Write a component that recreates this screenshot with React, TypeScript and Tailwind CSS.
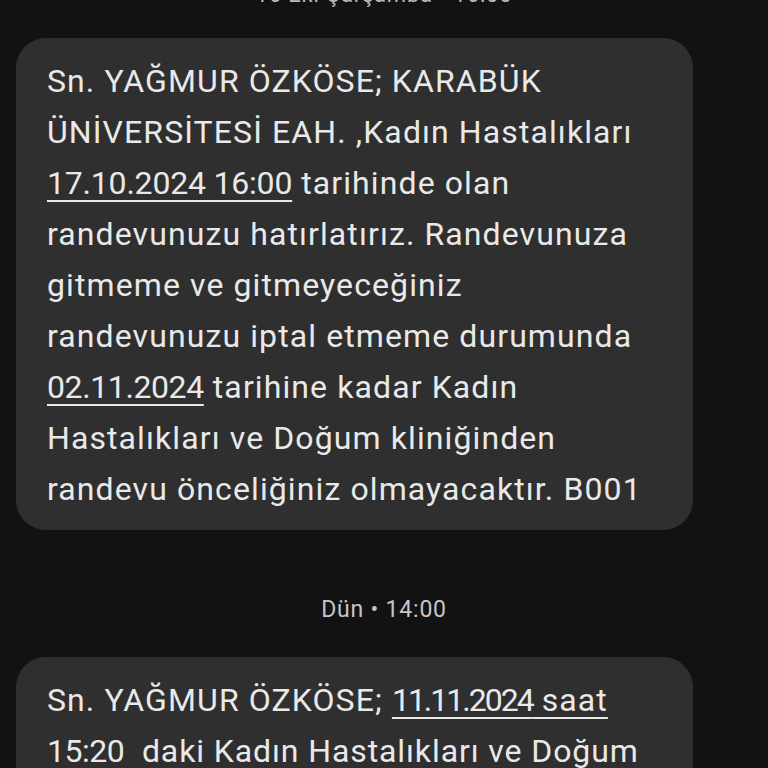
import React from "react";

const font = { fontFamily: "Roboto, 'Noto Sans', sans-serif" };

function Link({ children, className = "" }: { children: React.ReactNode; className?: string }) {
  return (
    <span className={`underline decoration-2 underline-offset-[6px] ${className}`}>{children}</span>
  );
}

function Bubble({ lines }: { lines: React.ReactNode[] }) {
  return (
    <div className="w-[677px] rounded-[30px] bg-[#2f2f2f] pl-[31px] pr-4 pt-[18px] pb-[15px] text-[32px] leading-[51px] tracking-[1.1px] text-[#e9e9e9]">
      {lines.map((l, i) => (
        <div key={i} className="whitespace-pre">
          {l}
        </div>
      ))}
    </div>
  );
}

export default function App() {
  return (
    <div className="h-[768px] w-[768px] overflow-hidden bg-[#121212] px-4" style={font}>
      <div className="h-[10px] overflow-hidden text-center">
        <div className="mt-[-17px] text-[22px] leading-[24px] tracking-[0.8px] text-[#bdbdbd]">
          16 Eki Çarşamba • 16:00
        </div>
      </div>

      <div className="mt-[28px]">
        <Bubble
          lines={[
            "Sn. YAĞMUR ÖZKÖSE; KARABÜK",
            "ÜNİVERSİTESİ EAH. ,Kadın Hastalıkları",
            <>
              <Link className="tracking-[-0.2px]">17.10.2024 16:00</Link> tarihinde olan
            </>,
            "randevunuzu hatırlatırız. Randevunuza",
            "gitmeme ve gitmeyeceğiniz",
            "randevunuzu iptal etmeme durumunda",
            <>
              <Link className="tracking-[-0.4px]">02.11.2024</Link> tarihine kadar Kadın
            </>,
            "Hastalıkları ve Doğum kliniğinden",
            "randevu önceliğiniz olmayacaktır. B001",
          ]}
        />
      </div>

      <div className="mt-[66px] mb-[33px] text-center text-[23px] leading-[28px] tracking-[0.8px] text-[#c6c6c6]">
        Dün • 14:00
      </div>

      <Bubble
        lines={[
          <>
            Sn. YAĞMUR ÖZKÖSE;{" "}
            <Link>
              <span className="tracking-[-2px]">11.11.2024</span> saat
            </Link>
          </>,
          <span className="tracking-[0.9px]">
            <Link className="tracking-[-0.5px]">15:20</Link>
            {"  "}daki Kadın Hastalıkları ve Doğum
          </span>,
          "kliniğindeki randevunuzu hatırlatırız.",
        ]}
      />
    </div>
  );
}
